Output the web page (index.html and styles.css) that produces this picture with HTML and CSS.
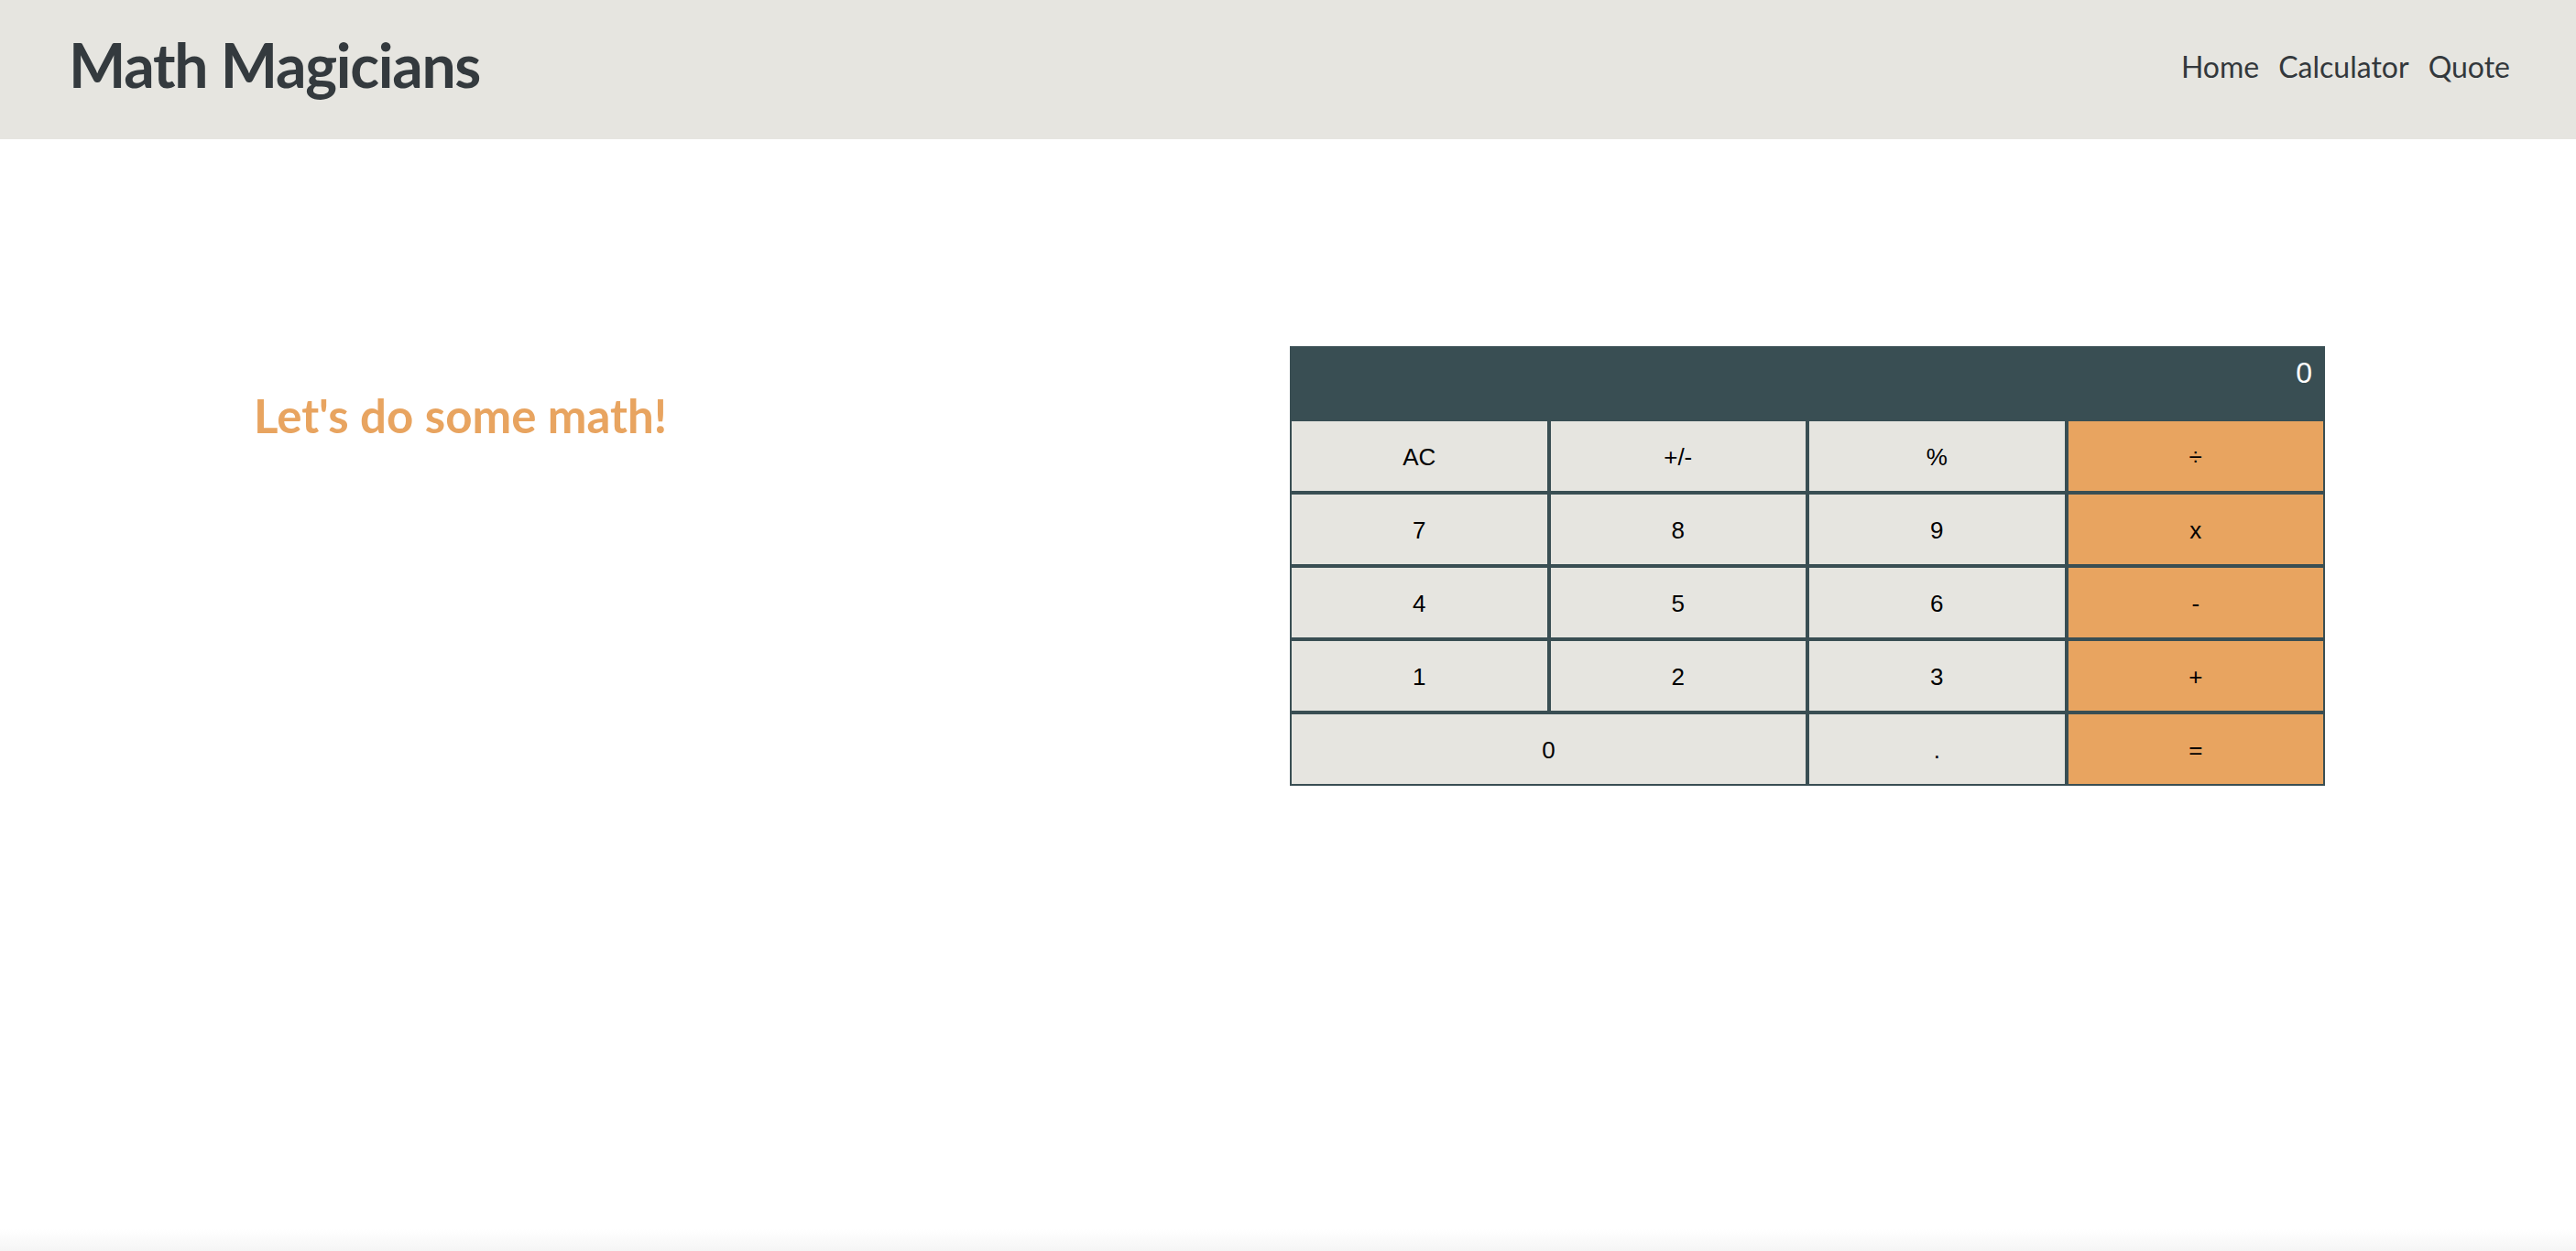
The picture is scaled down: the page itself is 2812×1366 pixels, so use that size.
FILE: index.html
```html
<!DOCTYPE html>
<html lang="en">
<head>
<meta charset="utf-8">
<title>Math Magicians</title>
<link rel="stylesheet" href="styles.css">
</head>
<body>
<header class="topbar">
  <h1 class="brand">Math Magicians</h1>
  <nav class="nav">
    <a class="nav-link" href="#">Home</a>
    <a class="nav-link" href="#">Calculator</a>
    <a class="nav-link" href="#">Quote</a>
  </nav>
</header>
<main class="main">
  <h2 class="intro">Let's do some math!</h2>
  <div class="calc">
    <div class="screen">0</div>
    <button class="key">AC</button>
    <button class="key">+/-</button>
    <button class="key">%</button>
    <button class="key op">÷</button>
    <button class="key">7</button>
    <button class="key">8</button>
    <button class="key">9</button>
    <button class="key op">x</button>
    <button class="key">4</button>
    <button class="key">5</button>
    <button class="key">6</button>
    <button class="key op">-</button>
    <button class="key">1</button>
    <button class="key">2</button>
    <button class="key">3</button>
    <button class="key op">+</button>
    <button class="key wide">0</button>
    <button class="key">.</button>
    <button class="key op">=</button>
  </div>
</main>
</body>
</html>
```

FILE: styles.css
```css
* { box-sizing: border-box; }

html, body { height: 100%; }

body {
  margin: 0;
  font-family: "Lato", "Open Sans", sans-serif;
  color: #33383c;
  background: linear-gradient(to bottom, #ffffff calc(100% - 24px), #f5f5f5);
}

.topbar {
  height: 152px;
  background: #e6e5e0;
  display: flex;
  align-items: center;
  justify-content: space-between;
  padding: 0 72px 0 75px;
}

.brand {
  margin: 0 0 11px;
  font-size: 66px;
  font-weight: 700;
  color: #343a3e;
  letter-spacing: -1.3px;
  line-height: 1;
}

.nav {
  display: flex;
  gap: 21px;
  margin-bottom: 7px;
}

.nav-link {
  color: #33383c;
  text-decoration: none;
  font-size: 32px;
}

.main {
  display: flex;
  justify-content: space-between;
  align-items: flex-start;
  padding: 226px 274px 0 277px;
}

.intro {
  margin: 45px 0 0;
  font-size: 51px;
  font-weight: 700;
  color: #e8a460;
  line-height: 1.2;
}

.calc {
  width: 1130px;
  display: grid;
  grid-template-columns: repeat(4, 1fr);
  grid-template-rows: repeat(6, 80px);
  font-family: "Liberation Sans", Arial, sans-serif;
}

.screen {
  grid-column: 1 / -1;
  background: #394e53;
  color: #ffffff;
  font-size: 32px;
  text-align: right;
  padding: 11px 14px 0 0;
}

.key {
  border: 2px solid #394e53;
  background: #e6e5e0;
  color: #000;
  font-family: inherit;
  font-size: 26px;
  padding: 2px 0 0;
  margin: 0;
}

.key.op { background: #e8a460; }

.key.wide { grid-column: span 2; }
```
